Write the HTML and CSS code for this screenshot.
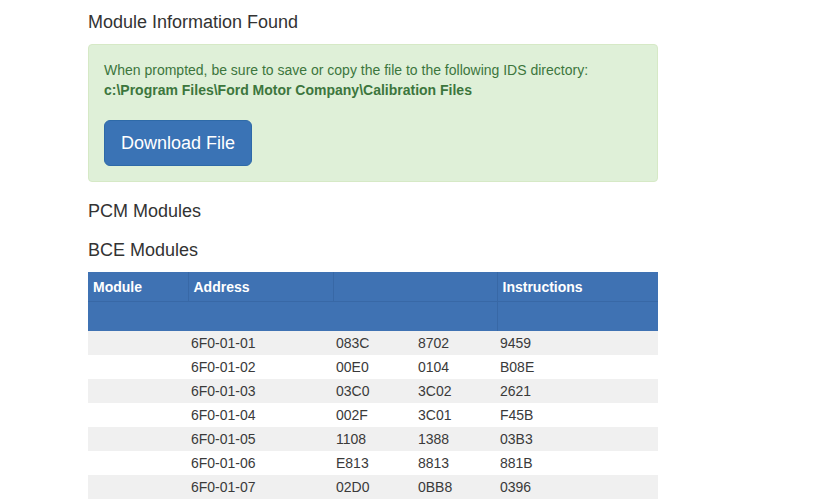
FILE: index.html
```html
<!DOCTYPE html>
<html lang="en">
<head>
    <meta charset="UTF-8">
    <title>Module Information</title>
    <link rel="stylesheet" href="styles.css">
</head>
<body>
    <main class="page">
        <h4 class="title">Module Information Found</h4>
        <div class="alert">
            <p>When prompted, be sure to save or copy the file to the following IDS directory:<br>
            <b>c:\Program Files\Ford Motor Company\Calibration Files</b></p>
            <button class="btn">Download File</button>
        </div>
        <h4 class="section pcm">PCM Modules</h4>
        <h4 class="section bce">BCE Modules</h4>
        <table class="modules">
            <colgroup>
                <col style="width: 100px">
                <col style="width: 145px">
                <col style="width: 82px">
                <col style="width: 82px">
                <col style="width: 161px">
            </colgroup>
            <thead>
                <tr class="head-main">
                    <th>Module</th>
                    <th>Address</th>
                    <th colspan="2"></th>
                    <th>Instructions</th>
                </tr>
                <tr class="head-sub">
                    <th colspan="4"></th>
                    <th></th>
                </tr>
            </thead>
            <tbody>
                <tr><td></td><td>6F0-01-01</td><td>083C</td><td>8702</td><td>9459</td></tr>
                <tr><td></td><td>6F0-01-02</td><td>00E0</td><td>0104</td><td>B08E</td></tr>
                <tr><td></td><td>6F0-01-03</td><td>03C0</td><td>3C02</td><td>2621</td></tr>
                <tr><td></td><td>6F0-01-04</td><td>002F</td><td>3C01</td><td>F45B</td></tr>
                <tr><td></td><td>6F0-01-05</td><td>1108</td><td>1388</td><td>03B3</td></tr>
                <tr><td></td><td>6F0-01-06</td><td>E813</td><td>8813</td><td>881B</td></tr>
                <tr><td></td><td>6F0-01-07</td><td>02D0</td><td>0BB8</td><td>0396</td></tr>
            </tbody>
        </table>
    </main>
</body>
</html>
```

FILE: styles.css
```css
* {
    margin: 0;
    padding: 0;
    box-sizing: border-box;
}

body {
    font-family: 'Liberation Sans', Arial, sans-serif;
    font-size: 14px;
    line-height: 20px;
    color: #333333;
    background: #ffffff;
}

.page {
    width: 570px;
    margin-left: 88px;
    padding-top: 12px;
}

h4 {
    font-size: 18px;
    font-weight: normal;
    line-height: 20px;
}

.title {
    margin-bottom: 12px;
}

.alert {
    background-color: #dff0d8;
    border: 1px solid #d6e9c6;
    border-radius: 4px;
    color: #3c763d;
    padding: 15px;
}

.alert p {
    margin-bottom: 20px;
}

.btn {
    font-family: inherit;
    font-size: 18px;
    line-height: 24px;
    padding: 10px 16px;
    border: 1px solid #2e6aa8;
    border-radius: 6px;
    background-color: #3a73b5;
    color: #ffffff;
    cursor: pointer;
}

.pcm {
    margin-top: 19px;
}

.bce {
    margin-top: 19px;
    margin-bottom: 12px;
}

.modules {
    width: 570px;
    border-collapse: collapse;
    table-layout: fixed;
}

.modules th {
    background-color: #3f72b3;
    color: #ffffff;
    font-weight: bold;
    text-align: left;
    padding: 5px 5px 4px;
    border-left: 1px solid #3868a6;
    height: 29px;
}

.modules th:first-child {
    border-left: none;
}

.head-main th {
    border-bottom: 1px solid #3868a6;
}

.head-sub th {
    height: 29px;
}

.modules td {
    padding: 2px 3px;
    height: 24px;
    color: #3a3a3a;
}

.modules tbody tr:nth-child(odd) {
    background-color: #f0f0f0;
}
```
